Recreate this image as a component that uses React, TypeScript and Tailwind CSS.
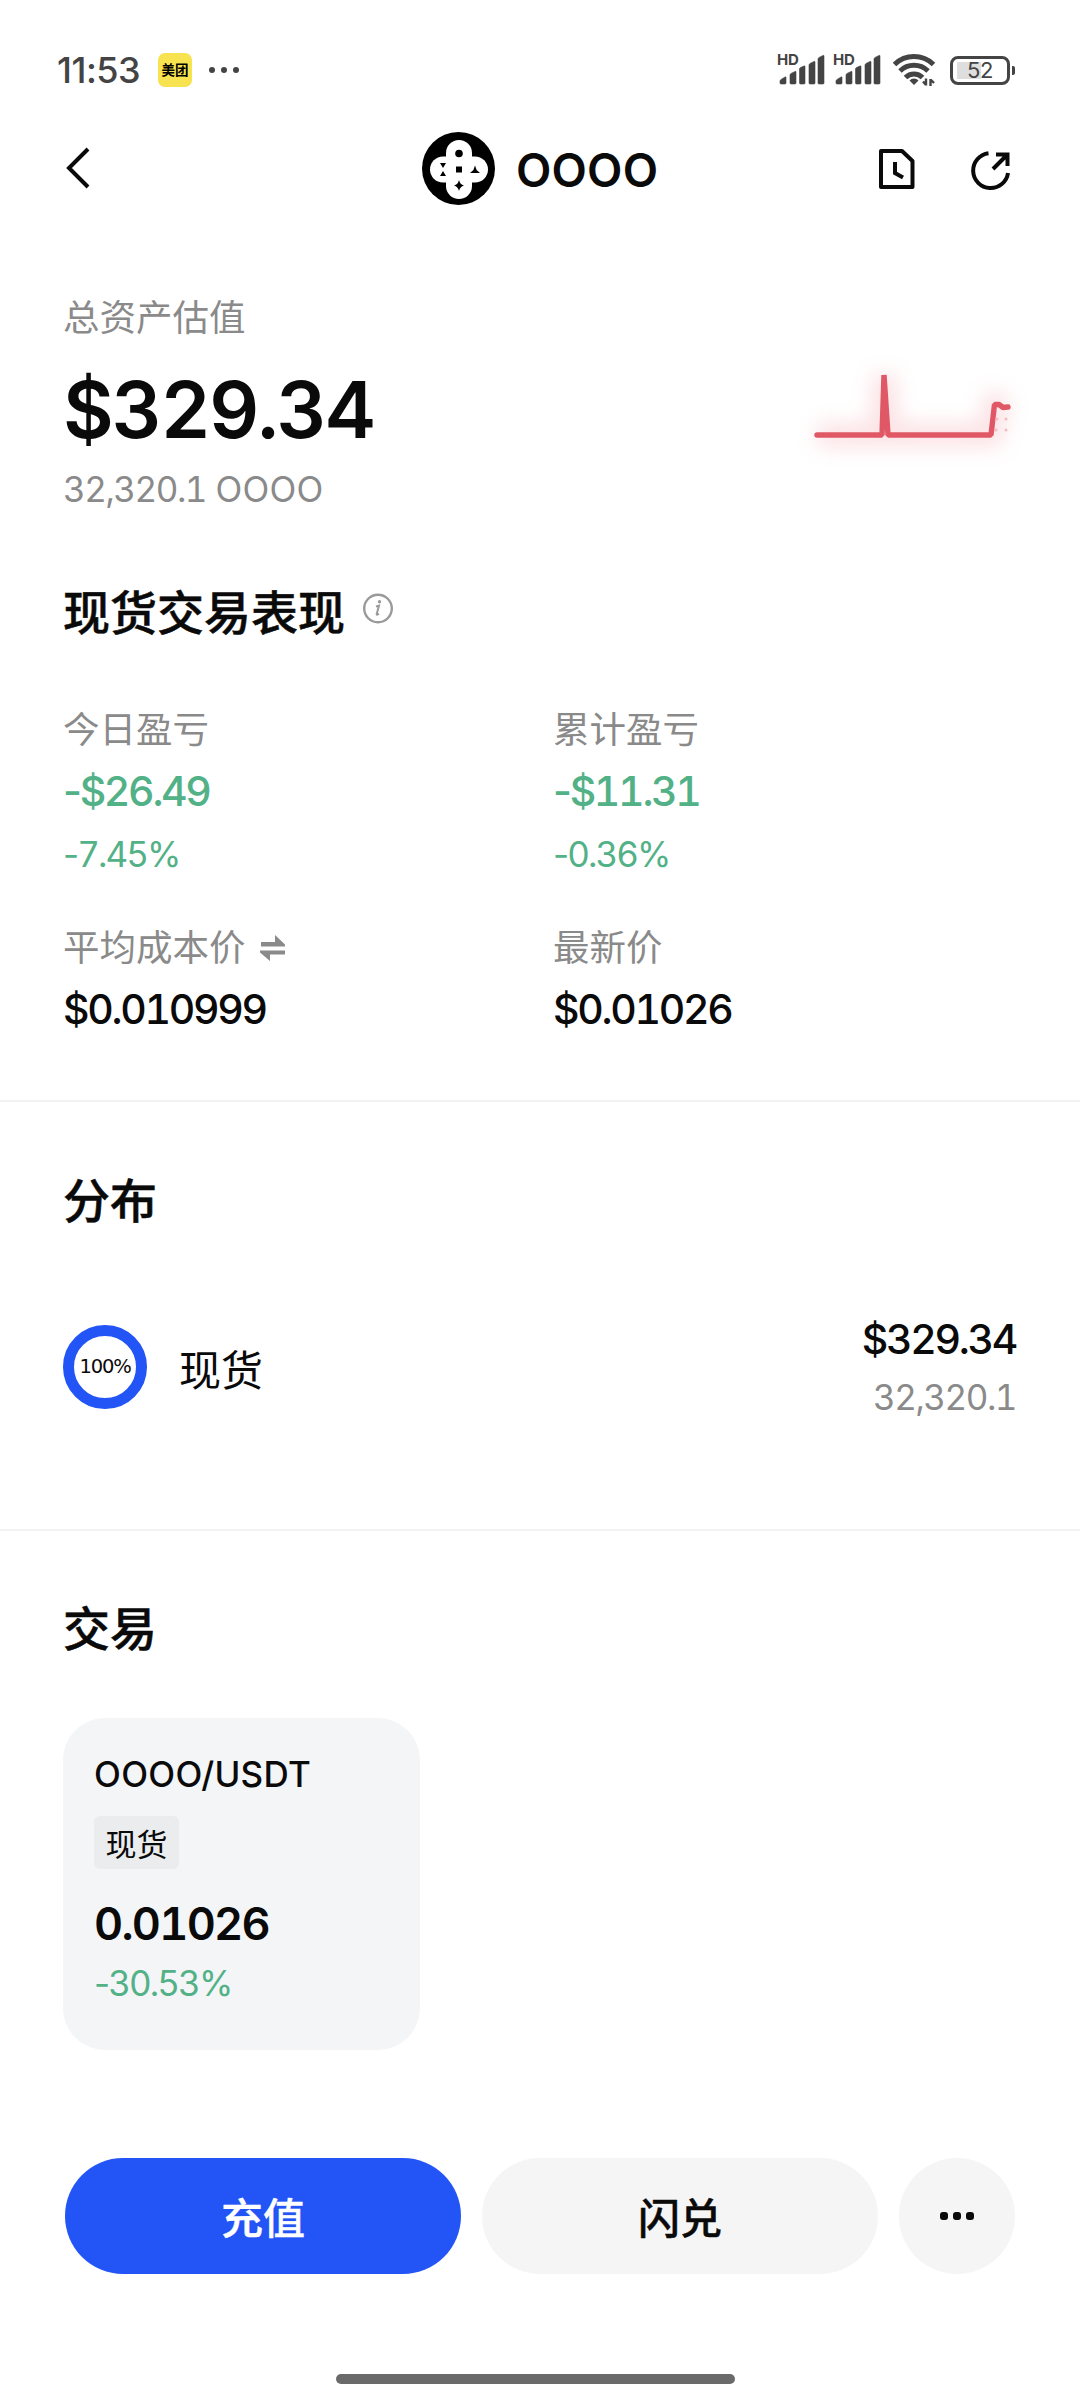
import type { ReactNode } from "react"

function SignalBars() {
  return (
    <div className="relative h-10 w-[46px]">
      <span className="absolute -left-px top-[3px] text-[15px] font-bold leading-[14px] tracking-[-0.200px]">HD</span>
      <svg className="absolute left-0 top-0" width="48" height="40" fill="#444" stroke="#444" strokeWidth="0.600">
        <path d="M2 33v-2q0-1 1-1.500l4-2.500q1-.5 1 .5v5.500q0 1-1 1h-4q-1 0-1-1z" />
        <path d="M12 33v-8q0-1 1-1.500l4-2q1-.5 1 .5v11q0 1-1 1h-4q-1 0-1-1z" />
        <path d="M21.500 33v-14q0-1 1-1.500l3.500-1.500q1-.5 1 .5v16.500q0 1-1 1h-3.500q-1 0-1-1z" />
        <path d="M31 33v-18q0-1 1-1.500l4-2q1-.5 1 .5v21q0 1-1 1h-4q-1 0-1-1z" />
        <path d="M40 33v-24q0-1 1-1.500l4-2q1-.5 1 .5v27q0 1-1 1h-4q-1 0-1-1z" />
      </svg>
    </div>
  )
}

function WifiIcon() {
  return (
    <svg className="ml-[13px]" width="44" height="40" fill="none" stroke="#444" strokeWidth="5">
      <path d="M1.500 14.500a28 28 0 0 1 39 0" />
      <path d="M7 21a20 20 0 0 1 28 0" />
      <path d="M12.500 27.500a12 12 0 0 1 17 0" />
      <path d="M21 35l-4.500-4.500a6 6 0 0 1 9 0z" fill="#444" stroke="none" />
      <path d="M33 28.500v7M37.500 29v7M33 35l-3-3.500M37.500 29.500l3.500 3.500" strokeWidth="2.400" />
    </svg>
  )
}

function CoinLogo() {
  return (
    <svg width="73" height="73" viewBox="0 0 73 73">
      <circle cx="36.500" cy="36.500" r="36.500" fill="#000" />
      <g fill="#fff">
        <rect x="24" y="8" width="26" height="59" rx="13" />
        <rect x="8" y="24.500" width="58" height="26" rx="13" />
      </g>
      <circle cx="37" cy="21.500" r="3.800" />
      <rect x="34" y="34.500" width="6" height="6" />
      <path d="M53 33.500l1.600 4.500 3.400 3h-10l3.400-3z" />
      <path d="M18 31h6l-3 5zM18 44h6l-3-5z" />
      <path d="M37 48q1 4.500 5 5.500q-4 1-5 5.500q-1-4.500-5-5.500q4-1 5-5.500z" />
    </svg>
  )
}

function Sparkline() {
  const line = "M21 66H86L88 6L92 66H195L198.500 35.500H203L207 38.500L212 38"
  return (
    <svg className="overflow-visible" width="220" height="140" fill="none">
      <defs>
        <filter id="glow" x="-30%" y="-60%" width="160%" height="220%">
          <feGaussianBlur stdDeviation="10" />
        </filter>
      </defs>
      <path d={line} stroke="#f4a6ad" strokeWidth="24" opacity="0.32" filter="url(#glow)" />
      <path d={line} stroke="#e05865" strokeWidth="5.400" strokeLinecap="round" strokeLinejoin="bevel" />
      <g fill="#f3bcc2">
        <circle cx="201" cy="50" r="1.500" />
        <circle cx="210" cy="50" r="1.500" />
        <circle cx="200" cy="61" r="1.500" />
        <circle cx="210" cy="61" r="1.500" />
      </g>
    </svg>
  )
}

function Label({ children }: { children: ReactNode }) {
  return <div className="flex h-10 items-center pt-[2px] text-[36.500px] leading-[38px] text-[#8a8a8a]">{children}</div>
}

function Heading({ children }: { children: ReactNode }) {
  return <h2 className="text-[47px] font-medium leading-[50px] [-webkit-text-stroke:0.500px_#0a0a0a]">{children}</h2>
}

function Value({ children }: { children: ReactNode }) {
  return <div className="mt-5 text-[41px] font-medium leading-[45px] tracking-[-2.300px]">{children}</div>
}

// the minus keeps its own narrow width, the digits stay tabular
function Loss({ children }: { children: ReactNode }) {
  return (
    <span className="text-[#52b187]">
      <span className="normal-nums">-</span>
      {children}
    </span>
  )
}

function Percent({ children }: { children: ReactNode }) {
  return (
    <div className="text-[35px] leading-10 tracking-[-1.900px]">
      <Loss>{children}</Loss>
    </div>
  )
}

export default function App() {
  return (
    <div className="h-[2400px] w-[1080px] overflow-hidden bg-white font-['Inter','Noto_Sans_CJK_SC',sans-serif] tabular-nums text-[#0a0a0a]">
      {/* status bar */}
      <div className="flex h-[131px] justify-between pl-[57px] pr-[65px] pt-[50px] text-[#444]">
        <div className="flex h-10 items-center">
          <span className="w-[101px] text-[36px] font-medium leading-10 tracking-[-0.500px] normal-nums">11:53</span>
          <span className="flex h-[34px] w-[34px] items-center justify-center rounded-[7px] bg-[#f7e34f] text-[13.500px] font-bold text-black">美团</span>
          <svg className="ml-[17px]" width="32" height="8" fill="#444">
            <circle cx="3" cy="4" r="3" />
            <circle cx="15" cy="4" r="3" />
            <circle cx="27" cy="4" r="3" />
          </svg>
        </div>
        <div className="flex h-10 items-center">
          <SignalBars />
          <div className="w-[10px]" />
          <SignalBars />
          <WifiIcon />
          <div className="ml-[13px] flex h-[29px] w-[60px] items-center rounded-[8px] border-[3px] border-[#444] bg-[linear-gradient(#dedede,#dedede)] bg-[length:24px_17px] bg-[position:4px_3px] bg-no-repeat">
            <span className="w-full text-center text-[22px] leading-none tracking-[-0.500px] normal-nums">52</span>
          </div>
          <div className="ml-[2px] h-[9px] w-[3px] rounded-r-[2px] bg-[#444]" />
        </div>
      </div>

      {/* title bar */}
      <div className="flex h-[74px] items-center pl-[66px] pr-[69px]">
        <svg width="26" height="42" fill="none" stroke="#0a0a0a" strokeWidth="4">
          <path d="M22 2L3 21l19 19" />
        </svg>
        <div className="ml-[330px] flex w-[457px] items-center">
          <CoinLogo />
          <h1 className="ml-[21px] pt-[4px] text-[46px] font-semibold leading-[70px] tracking-[0.200px]">OOOO</h1>
        </div>
        <svg className="mt-[2px]" width="36" height="42" fill="none" stroke="#0a0a0a" strokeWidth="4">
          <path d="M2 3h21l10.500 10v26H2z" strokeLinejoin="round" />
          <path d="M16 14v11l8 4.500" />
        </svg>
        <svg className="ml-[56px] mt-[3px]" width="40" height="42" fill="none" stroke="#0a0a0a" strokeWidth="4">
          <path d="M17.500 4.200A17.500 17.500 0 1 0 37 24" />
          <path d="M22 20L36 6M25 5.500h11.500V17" />
        </svg>
      </div>

      {/* total value */}
      <div className="pl-[63px] pr-16 pt-[92px]">
        <Label>总资产估值</Label>
        <div className="mt-8 flex justify-between">
          <div>
            <div className="text-[78px] font-semibold leading-[82px] tracking-[-1.900px]">$329.34</div>
            <div className="mt-[18px] text-[35px] leading-10 text-[#8a8a8a]">
              <span className="tracking-[-1.500px]">32,320.1</span> <span className="tracking-[0.300px]">OOOO</span>
            </div>
          </div>
          <Sparkline />
        </div>
      </div>

      {/* spot performance */}
      <div className="pl-[63px] pr-16 pt-[79px]">
        <div className="flex">
          <Heading>现货交易表现</Heading>
          <svg className="ml-[17px] mt-[5px]" width="32" height="32" fill="none" stroke="#9a9a9a">
            <circle cx="16" cy="15.500" r="13.800" strokeWidth="2.400" />
            <path d="M14 13.500l3-.8-2.300 8.300q-.3 1.600 2.300-.3" strokeWidth="2" />
            <circle cx="17.500" cy="8.700" r="1.700" fill="#9a9a9a" stroke="none" />
          </svg>
        </div>
        <div className="mt-[71px] grid grid-cols-[490px_1fr]">
          <div>
            <Label>今日盈亏</Label>
            <Value><Loss>$26.49</Loss></Value>
            <div className="mt-5"><Percent>7.45%</Percent></div>
          </div>
          <div>
            <Label>累计盈亏</Label>
            <Value><Loss>$11.31</Loss></Value>
            <div className="mt-5"><Percent>0.36%</Percent></div>
          </div>
          <div className="mt-[53px]">
            <Label>
              平均成本价
              <svg className="ml-[14px]" width="26" height="28" fill="#8a8a8a">
                <path d="M1 8h14V1l10 9.500v2H1zM25 16.500H0v2L10 27v-6.500h15z" />
              </svg>
            </Label>
            <Value>$0.010999</Value>
          </div>
          <div className="mt-[53px]">
            <Label>最新价</Label>
            <Value>$0.01026</Value>
          </div>
        </div>
      </div>

      <div className="mt-[68px] h-[2px] bg-[#f3f3f3]" />

      {/* distribution */}
      <div className="pl-[63px] pr-16 pt-[74px]">
        <Heading>分布</Heading>
        <div className="mt-[91px] flex items-center">
          <div className="flex h-[84px] w-[84px] items-center justify-center rounded-full border-[11px] border-[#2254f6] font-['DejaVu_Sans'] text-[19.500px] tracking-[-1.200px]">
            100%
          </div>
          <div className="ml-8 pt-[8px] text-[42px] leading-[50px]">现货</div>
          <div className="ml-auto text-right">
            <div className="-mt-5"><Value>$329.34</Value></div>
            <div className="mt-[15px] text-[35px] leading-10 tracking-[-1.500px] text-[#8a8a8a]">32,320.1</div>
          </div>
        </div>
      </div>

      <div className="mt-[112px] h-[2px] bg-[#f3f3f3]" />

      {/* trade */}
      <div className="pl-[63px] pr-16 pt-[73px]">
        <Heading>交易</Heading>
        <div className="mt-[64px] h-[332px] w-[357px] rounded-[42px] bg-[#f4f5f6] pl-[31px] pt-9">
          <div className="text-[35px] font-medium leading-10 tracking-[0.300px]">OOOO/USDT</div>
          <div className="mt-[22px] flex h-[53px] w-[85px] items-center justify-center rounded-[6px] bg-[#ebecee] pt-[3px] text-[31px] leading-none">现货</div>
          <div className="mt-[30px] text-[45px] font-semibold leading-[50px] tracking-[-1.700px]">0.01026</div>
          <div className="mt-[14px]"><Percent>30.53%</Percent></div>
        </div>
      </div>

      {/* actions */}
      <div className="mt-[108px] flex px-[65px] text-[42px] font-medium">
        <button className="h-[116px] w-[396px] rounded-full bg-[#2254f6] pt-[4px] text-white [-webkit-text-stroke:0.400px_white]">充值</button>
        <button className="ml-[21px] h-[116px] w-[396px] rounded-full bg-[#f5f5f5] pt-[4px] [-webkit-text-stroke:0.400px_#0a0a0a]">闪兑</button>
        <button className="ml-[21px] flex h-[116px] w-[116px] items-center justify-center gap-[5px] rounded-full bg-[#f5f5f5]">
          <span className="h-2 w-2 rounded-[3px] bg-[#0a0a0a]" />
          <span className="h-2 w-2 rounded-[3px] bg-[#0a0a0a]" />
          <span className="h-2 w-2 rounded-[3px] bg-[#0a0a0a]" />
        </button>
      </div>

      <div className="ml-[336px] mt-[100px] h-[10px] w-[399px] rounded-full bg-[#6a6a6a]" />
    </div>
  )
}
